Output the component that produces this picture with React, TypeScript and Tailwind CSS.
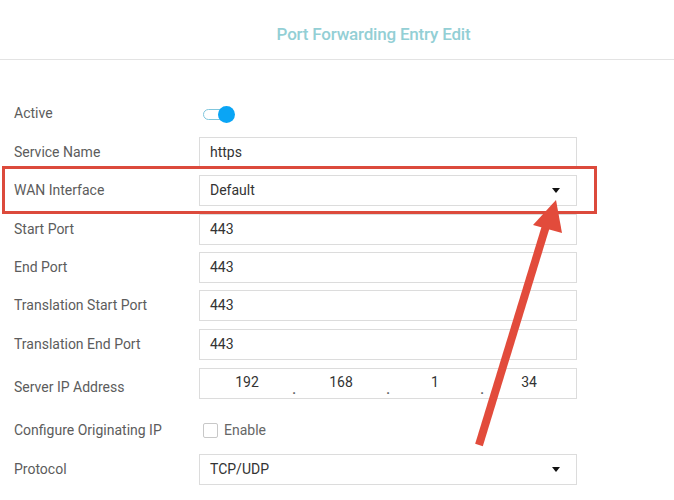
import React from "react";

const font = { fontFamily: "Roboto, 'Liberation Sans', sans-serif" };

function Caret() {
  return (
    <svg width="8" height="5" viewBox="0 0 8 5" className="shrink-0">
      <path d="M0 0h8L4 5z" fill="#111" />
    </svg>
  );
}

function TextBox({ value }: { value: string }) {
  return (
    <div className="flex h-[31px] w-[378px] items-center border border-[#dcdcdc] bg-white px-[10px] text-[14px] text-[#333]">
      {value}
    </div>
  );
}

function SelectBox({ value }: { value: string }) {
  return (
    <div className="flex h-[31px] w-[378px] items-center justify-between border border-[#dcdcdc] bg-white pl-[10px] pr-[16px] text-[14px] text-[#333]">
      <span>{value}</span>
      <Caret />
    </div>
  );
}

function IpBox({ parts }: { parts: string[] }) {
  return (
    <div className="flex h-[31px] w-[378px] border border-[#dcdcdc] bg-white text-[14px] text-[#333]">
      {parts.map((p, i) => (
        <div key={i} className="relative flex flex-1 items-center justify-center pb-[2px]">
          {p}
          {i < parts.length - 1 && (
            <span className="absolute bottom-[2px] right-[-2px] text-[13px] font-bold leading-none text-[#666]">.</span>
          )}
        </div>
      ))}
    </div>
  );
}

function Row({
  label,
  mt,
  labelClass = "",
  children,
}: {
  label: string;
  mt: string;
  labelClass?: string;
  children: React.ReactNode;
}) {
  return (
    <div className={`flex h-[31px] items-center ${mt}`}>
      <div className={`w-[199px] shrink-0 pl-[14px] text-[14px] text-[#5c5c5c] ${labelClass}`}>{label}</div>
      {children}
    </div>
  );
}

export default function App() {
  return (
    <div className="relative h-[500px] w-[674px] overflow-hidden bg-white" style={font}>
      <div className="flex h-[60px] items-center justify-center border-b border-[#e3e3e3] pl-[73px] pt-[11px]">
        <span className="text-[17px] font-medium tracking-[-0.2px] text-[#93cfd5]">Port Forwarding Entry Edit</span>
      </div>

      <div className="flex flex-col">
        <Row label="Active" mt="mt-[38px]">
          <div className="relative ml-[4px] h-[16px] w-[32px]">
            <div className="absolute left-0 top-[3px] h-[11px] w-[26px] rounded-full border border-[#7fc6dd] bg-white" />
            <div className="absolute left-[15px] top-0 h-[17px] w-[17px] rounded-full bg-[#0aa5f5]" />
          </div>
        </Row>
        <Row label="Service Name" mt="mt-[8px]">
          <TextBox value="https" />
        </Row>
        <Row label="WAN Interface" mt="mt-[7px]">
          <SelectBox value="Default" />
        </Row>
        <Row label="Start Port" mt="mt-[8px]">
          <TextBox value="443" />
        </Row>
        <Row label="End Port" mt="mt-[7px]">
          <TextBox value="443" />
        </Row>
        <Row label="Translation Start Port" mt="mt-[7px]">
          <TextBox value="443" />
        </Row>
        <Row label="Translation End Port" mt="mt-[8px]">
          <TextBox value="443" />
        </Row>
        <Row label="Server IP Address" mt="mt-[8px]" labelClass="pt-[7px]">
          <IpBox parts={["192", "168", "1", "34"]} />
        </Row>
        <Row label="Configure Originating IP" mt="mt-[16px]">
          <label className="flex items-center gap-[6px] pl-[4px] text-[14px] text-[#666]">
            <span className="h-[15px] w-[15px] rounded-[2px] border border-[#c8c8c8] bg-white" />
            Enable
          </label>
        </Row>
        <Row label="Protocol" mt="mt-[8px]">
          <SelectBox value="TCP/UDP" />
        </Row>
      </div>

      <div className="absolute left-[2px] top-[166px] h-[48px] w-[595px] border-[3px] border-[#dc4a3c]" />

      <svg className="absolute left-0 top-0" width="674" height="500" viewBox="0 0 674 500">
        <line x1="479" y1="445" x2="546" y2="226" stroke="#e24b3b" strokeWidth="8" />
        <polygon points="556,200 533,225 562,233" fill="#e24b3b" />
      </svg>
    </div>
  );
}
